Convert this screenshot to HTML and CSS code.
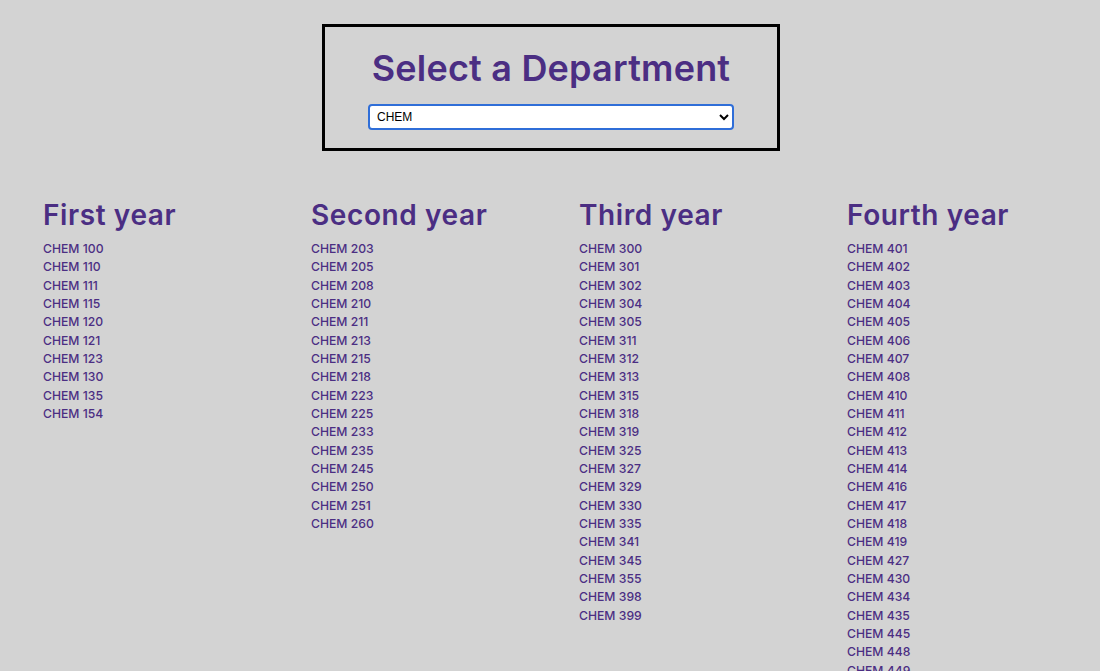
FILE: index.html
```html
<!DOCTYPE html>
<html>
<head>
<meta charset="utf-8">
<link rel="stylesheet" href="styles.css">
</head>
<body>
<div class="page">
  <div class="picker">
    <h1 class="picker-title">Select a Department</h1>
    <select class="picker-select">
      <option>CHEM</option>
    </select>
  </div>
  <div class="years">
    <div class="year">
      <h2 class="year-title">First year</h2>
      <ul class="courses">
        <li><a href="#">CHEM 100</a></li>
        <li><a href="#">CHEM 110</a></li>
        <li><a href="#">CHEM 111</a></li>
        <li><a href="#">CHEM 115</a></li>
        <li><a href="#">CHEM 120</a></li>
        <li><a href="#">CHEM 121</a></li>
        <li><a href="#">CHEM 123</a></li>
        <li><a href="#">CHEM 130</a></li>
        <li><a href="#">CHEM 135</a></li>
        <li><a href="#">CHEM 154</a></li>
      </ul>
    </div>
    <div class="year">
      <h2 class="year-title">Second year</h2>
      <ul class="courses">
        <li><a href="#">CHEM 203</a></li>
        <li><a href="#">CHEM 205</a></li>
        <li><a href="#">CHEM 208</a></li>
        <li><a href="#">CHEM 210</a></li>
        <li><a href="#">CHEM 211</a></li>
        <li><a href="#">CHEM 213</a></li>
        <li><a href="#">CHEM 215</a></li>
        <li><a href="#">CHEM 218</a></li>
        <li><a href="#">CHEM 223</a></li>
        <li><a href="#">CHEM 225</a></li>
        <li><a href="#">CHEM 233</a></li>
        <li><a href="#">CHEM 235</a></li>
        <li><a href="#">CHEM 245</a></li>
        <li><a href="#">CHEM 250</a></li>
        <li><a href="#">CHEM 251</a></li>
        <li><a href="#">CHEM 260</a></li>
      </ul>
    </div>
    <div class="year">
      <h2 class="year-title">Third year</h2>
      <ul class="courses">
        <li><a href="#">CHEM 300</a></li>
        <li><a href="#">CHEM 301</a></li>
        <li><a href="#">CHEM 302</a></li>
        <li><a href="#">CHEM 304</a></li>
        <li><a href="#">CHEM 305</a></li>
        <li><a href="#">CHEM 311</a></li>
        <li><a href="#">CHEM 312</a></li>
        <li><a href="#">CHEM 313</a></li>
        <li><a href="#">CHEM 315</a></li>
        <li><a href="#">CHEM 318</a></li>
        <li><a href="#">CHEM 319</a></li>
        <li><a href="#">CHEM 325</a></li>
        <li><a href="#">CHEM 327</a></li>
        <li><a href="#">CHEM 329</a></li>
        <li><a href="#">CHEM 330</a></li>
        <li><a href="#">CHEM 335</a></li>
        <li><a href="#">CHEM 341</a></li>
        <li><a href="#">CHEM 345</a></li>
        <li><a href="#">CHEM 355</a></li>
        <li><a href="#">CHEM 398</a></li>
        <li><a href="#">CHEM 399</a></li>
      </ul>
    </div>
    <div class="year">
      <h2 class="year-title">Fourth year</h2>
      <ul class="courses">
        <li><a href="#">CHEM 401</a></li>
        <li><a href="#">CHEM 402</a></li>
        <li><a href="#">CHEM 403</a></li>
        <li><a href="#">CHEM 404</a></li>
        <li><a href="#">CHEM 405</a></li>
        <li><a href="#">CHEM 406</a></li>
        <li><a href="#">CHEM 407</a></li>
        <li><a href="#">CHEM 408</a></li>
        <li><a href="#">CHEM 410</a></li>
        <li><a href="#">CHEM 411</a></li>
        <li><a href="#">CHEM 412</a></li>
        <li><a href="#">CHEM 413</a></li>
        <li><a href="#">CHEM 414</a></li>
        <li><a href="#">CHEM 416</a></li>
        <li><a href="#">CHEM 417</a></li>
        <li><a href="#">CHEM 418</a></li>
        <li><a href="#">CHEM 419</a></li>
        <li><a href="#">CHEM 427</a></li>
        <li><a href="#">CHEM 430</a></li>
        <li><a href="#">CHEM 434</a></li>
        <li><a href="#">CHEM 435</a></li>
        <li><a href="#">CHEM 445</a></li>
        <li><a href="#">CHEM 448</a></li>
        <li><a href="#">CHEM 449</a></li>
      </ul>
    </div>
  </div>
</div>
</body>
</html>
```

FILE: styles.css
```css
html, body {
  margin: 0;
  padding: 0;
  background: #d3d3d3;
}
body {
  font-family: "Inter", "Noto Sans", sans-serif;
  color: #4b2e83;
}
.page {
  padding-top: 24px;
}
.picker {
  box-sizing: border-box;
  width: 458px;
  height: 127px;
  margin-left: calc(50% - 228px);
  border: 3px solid #000;
  display: flex;
  flex-direction: column;
  align-items: center;
  padding-top: 20px;
}
.picker-title {
  margin: 0;
  font-size: 36px;
  font-weight: 600;
  line-height: 42px;
  letter-spacing: 0.2px;
  color: #4b2e83;
}
.picker-select {
  margin-top: 15px;
  width: 366px;
  height: 26px;
  font-family: "Liberation Sans", Arial, sans-serif;
  font-size: 12px;
  color: #000;
  background: #fff;
  border: 2px solid #2f6ed8;
  border-radius: 4px;
  padding: 0 3px;
}
.years {
  display: grid;
  grid-template-columns: repeat(4, 268px);
  padding-left: 43px;
  padding-top: 47px;
}
.year-title {
  margin: 0 0 8px 0;
  font-size: 28px;
  font-weight: 600;
  line-height: 34px;
  letter-spacing: 0.6px;
  color: #4b2e83;
}
.courses {
  list-style: none;
  margin: 0;
  padding: 0;
}
.courses li {
  line-height: 18.33px;
  font-size: 12.2px;
  font-weight: 500;
}
.courses a {
  color: #4b2e83;
  text-decoration: none;
}
```
